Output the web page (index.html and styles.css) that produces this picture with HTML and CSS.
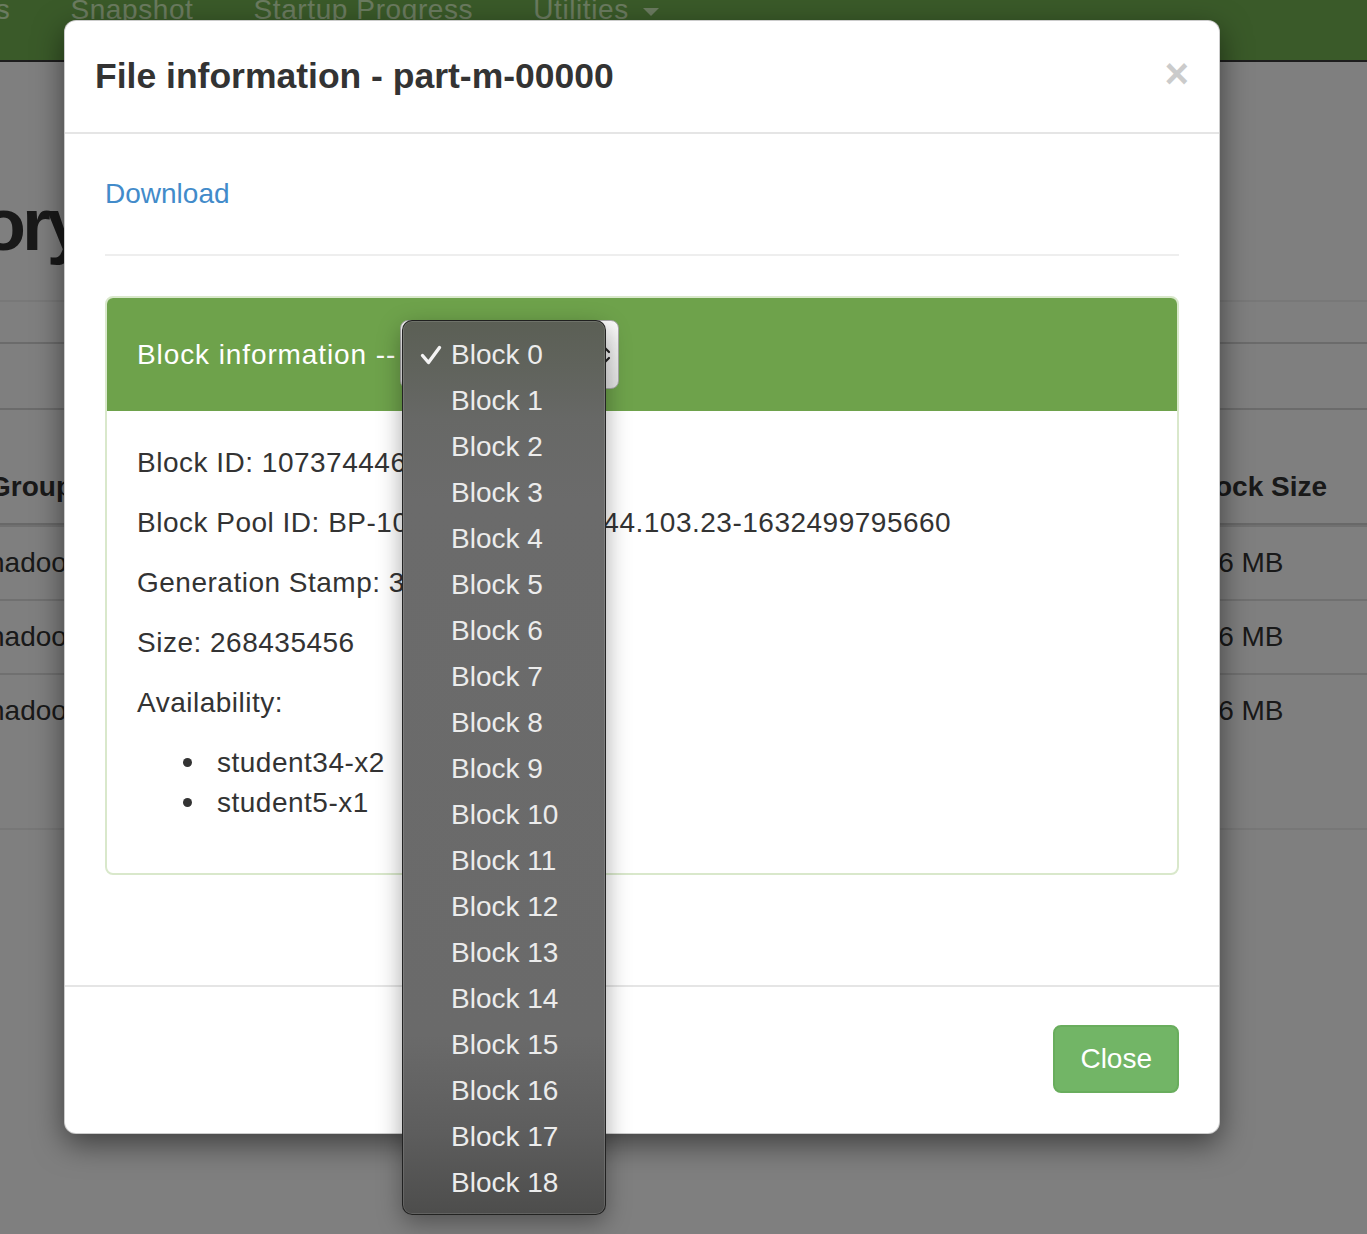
FILE: index.html
```html
<!DOCTYPE html>
<html lang="en">
<head>
<meta charset="utf-8">
<title>Browse Directory</title>
<link rel="stylesheet" href="styles.css">
</head>
<body>
<div class="page">
  <nav class="navbar">
    <ul class="nav">
      <li>Datanode Volume Failures</li>
      <li>Snapshot</li>
      <li>Startup Progress</li>
      <li>Utilities <span class="caret"></span></li>
    </ul>
  </nav>
  <div class="page-header">
    <div class="title-clip"><h1>Browse Directory</h1></div>
  </div>
  <div class="crumb-row"></div>
  <div class="toolbar-row"></div>
  <div class="table">
    <div class="tr th"><span class="c1">Group</span><span class="c2">Block Size</span></div>
    <div class="tr"><span class="c1">hadoop</span><span class="c2">256 MB</span></div>
    <div class="tr"><span class="c1">hadoop</span><span class="c2">256 MB</span></div>
    <div class="tr"><span class="c1">hadoop</span><span class="c2">256 MB</span></div>
  </div>
  <div class="table-foot"></div>
</div>

<div class="backdrop"></div>

<div class="modal">
  <div class="modal-header">
    <h4 class="modal-title">File information - part-m-00000</h4>
    <button class="close" type="button">×</button>
  </div>
  <div class="modal-body">
    <a class="link" href="#">Download</a>
    <hr>
    <div class="panel">
      <div class="panel-heading">
        <span class="heading-label">Block information -- </span>
        <span class="select">Block 0
          <svg class="updown" width="12" height="22" viewBox="0 0 12 22"><path d="M2 8 L6 4 L10 8 M2 14 L6 18 L10 14" fill="none" stroke="#222" stroke-width="2.2" stroke-linecap="round" stroke-linejoin="round"/></svg>
        </span>
      </div>
      <div class="panel-body">
        <p>Block ID: 1073744466</p>
        <p>Block Pool ID: BP-1013493396-10.144.103.23-1632499795660</p>
        <p>Generation Stamp: 3642</p>
        <p>Size: 268435456</p>
        <p>Availability:</p>
        <ul>
          <li>student34-x2</li>
          <li>student5-x1</li>
        </ul>
      </div>
    </div>
  </div>
  <div class="modal-footer">
    <button class="btn" type="button">Close</button>
  </div>
</div>

<ul class="menu">
  <li><span class="mark"><svg width="22" height="22" viewBox="0 0 22 22"><path d="M2.5 11.5 L8.5 18.5 L19.5 3.5" fill="none" stroke="#f4f4f4" stroke-width="3.4" stroke-linecap="round" stroke-linejoin="round"/></svg></span>Block 0</li>
  <li><span class="mark"></span>Block 1</li>
  <li><span class="mark"></span>Block 2</li>
  <li><span class="mark"></span>Block 3</li>
  <li><span class="mark"></span>Block 4</li>
  <li><span class="mark"></span>Block 5</li>
  <li><span class="mark"></span>Block 6</li>
  <li><span class="mark"></span>Block 7</li>
  <li><span class="mark"></span>Block 8</li>
  <li><span class="mark"></span>Block 9</li>
  <li><span class="mark"></span>Block 10</li>
  <li><span class="mark"></span>Block 11</li>
  <li><span class="mark"></span>Block 12</li>
  <li><span class="mark"></span>Block 13</li>
  <li><span class="mark"></span>Block 14</li>
  <li><span class="mark"></span>Block 15</li>
  <li><span class="mark"></span>Block 16</li>
  <li><span class="mark"></span>Block 17</li>
  <li><span class="mark"></span>Block 18</li>
</ul>
</body>
</html>
```

FILE: styles.css
```css
* { box-sizing: border-box; }
html, body { margin: 0; padding: 0; }
body {
  width: 1367px;
  height: 1234px;
  overflow: hidden;
  position: relative;
  background: #fff;
  font-family: "Liberation Sans", Arial, Helvetica, sans-serif;
  font-size: 28px;
  line-height: 40px;
  color: #333;
}

/* ---------- background page ---------- */
.navbar {
  height: 62px;
  background: #74b452;
  border-bottom: 2px solid #3a3a3a;
  overflow: hidden;
}
.nav {
  display: flex;
  list-style: none;
  margin: -10px 0 0 -364px;
  padding: 0;
  color: #d6f6c0;
  letter-spacing: 0.6px;
  white-space: nowrap;
}
.nav li { padding: 0 30px; }
.caret {
  display: inline-block;
  width: 0;
  height: 0;
  margin-left: 6px;
  vertical-align: middle;
  border-top: 8px solid #d6f6c0;
  border-left: 8px solid transparent;
  border-right: 8px solid transparent;
}
.page-header {
  height: 240px;
  padding-top: 123px;
  border-bottom: 2px solid #f0f0f0;
}
.title-clip {
  width: 84px;
  display: flex;
  justify-content: flex-end;
}
.title-clip h1 {
  flex: none;
  margin: 0;
  font-size: 74px;
  line-height: 80px;
  font-weight: bold;
  letter-spacing: -4px;
  white-space: nowrap;
  color: #333;
}
.crumb-row {
  height: 42px;
  border-bottom: 2px solid #d6d6d6;
}
.toolbar-row {
  height: 66px;
  border-bottom: 2px solid #d6d6d6;
}
.table { margin-top: 41px; }
.tr {
  display: flex;
  padding: 16px 0;
  line-height: 40px;
  white-space: nowrap;
}
.tr + .tr { border-top: 2px solid #e0e0e0; }
.th {
  font-weight: bold;
  border-bottom: 2px solid #d0d0d0;
}
.c1 { margin-left: -11px; }
.c2 { margin-left: auto; width: 180px; }
.table-foot {
  margin-top: 81px;
  border-top: 2px solid #eeeeee;
}

.backdrop {
  position: absolute;
  inset: 0;
  background: rgba(0, 0, 0, 0.5);
}

/* ---------- modal ---------- */
.modal {
  position: absolute;
  top: 20px;
  left: 64px;
  width: 1156px;
  background: #fff;
  border: 1px solid rgba(0, 0, 0, 0.2);
  border-radius: 12px;
  box-shadow: 0 10px 30px rgba(0, 0, 0, 0.5);
}
.modal-header {
  display: flex;
  justify-content: space-between;
  align-items: flex-start;
  padding: 30px;
  border-bottom: 2px solid #e5e5e5;
}
.modal-title {
  margin: 0;
  font-size: 35.5px;
  line-height: 51px;
  font-weight: bold;
  color: #333;
}
.close {
  font-family: inherit;
  font-size: 42px;
  line-height: 42px;
  font-weight: bold;
  color: #000;
  opacity: 0.2;
  background: none;
  border: 0;
  padding: 0;
  margin-top: 2px;
}
.modal-body { padding: 40px; }
.link { color: #428bca; text-decoration: none; }
hr {
  margin: 40px 0;
  border: 0;
  border-top: 2px solid #eeeeee;
}
.panel {
  border: 2px solid #d9e8cb;
  border-radius: 8px;
  margin-bottom: 40px;
}
.panel-heading {
  display: flex;
  align-items: center;
  padding: 22px 30px;
  background: #6ea24b;
  color: #fff;
  border-radius: 6px 6px 0 0;
}
.heading-label {
  width: 263px;
  letter-spacing: 0.9px;
  white-space: pre;
}
.select {
  display: flex;
  align-items: center;
  width: 219px;
  height: 69px;
  padding: 0 7px 0 24px;
  border: 1px solid #a9a9a9;
  border-radius: 8px;
  background: linear-gradient(#fbfbfb, #e4e4e4);
  color: #333;
}
.updown { margin-left: auto; }
.panel-body {
  padding: 32px 30px 30px;
  letter-spacing: 0.5px;
}
.panel-body p { margin: 0 0 20px; }
.panel-body ul {
  margin: 0 0 20px;
  padding-left: 80px;
  list-style: none;
}
.panel-body li { position: relative; }
.panel-body li::before {
  content: "";
  position: absolute;
  left: -34px;
  top: 15px;
  width: 9px;
  height: 9px;
  border-radius: 50%;
  background: #333;
}

.modal-footer {
  margin-top: 30px;
  padding: 38px 40px 40px;
  border-top: 2px solid #e5e5e5;
  display: flex;
  justify-content: flex-end;
}
.btn {
  font-family: inherit;
  font-size: 28px;
  line-height: 40px;
  color: #fff;
  background: #72b566;
  border: 2px solid #69ad5d;
  border-radius: 8px;
  padding: 12px 25px;
}

/* ---------- native select popup ---------- */
.menu {
  position: absolute;
  left: 402px;
  top: 320px;
  width: 204px;
  margin: 0;
  padding: 11px 0 8px;
  list-style: none;
  border: 1px solid rgba(25, 25, 25, 0.85);
  border-radius: 10px;
  background: linear-gradient(#5b5f55 0%, #60635c 5%, #676866 11%, #6b6b6b 20%, #6a6a6a 80%, #5d5d5d 91%, #4d4d4c 100%);
  box-shadow: inset 0 0 0 1px rgba(255, 255, 255, 0.12), 0 8px 24px rgba(0, 0, 0, 0.35);
}
.menu li {
  display: flex;
  align-items: center;
  height: 46px;
  color: #ececec;
  white-space: nowrap;
}
.mark {
  display: flex;
  align-items: center;
  width: 48px;
  padding-left: 17px;
}
```
